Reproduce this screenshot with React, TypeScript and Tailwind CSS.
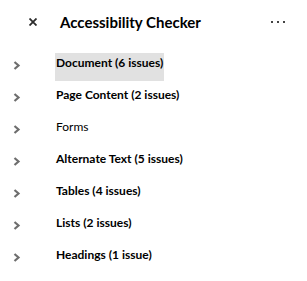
import React from "react";

const items = [
  { label: "Document (6 issues)", bold: true, active: true },
  { label: "Page Content (2 issues)", bold: true },
  { label: "Forms", bold: false },
  { label: "Alternate Text (5 issues)", bold: true },
  { label: "Tables (4 issues)", bold: true },
  { label: "Lists (2 issues)", bold: true },
  { label: "Headings (1 issue)", bold: true },
];

function Chevron() {
  return (
    <svg width="8" height="9" viewBox="0 0 8 9" className="block">
      <path d="M1.5 1 L5.5 4.5 L1.5 8" fill="none" stroke="#6e6e6e" strokeWidth="2.2" />
    </svg>
  );
}

export default function App() {
  return (
    <div
      className="h-[281px] w-[307px] bg-white text-[#1a1a1a]"
      style={{ fontFamily: 'Lato, "Open Sans", sans-serif' }}
    >
      <div className="flex h-[44px] items-center pl-[29px] pr-[22px]">
        <svg width="8" height="8" viewBox="0 0 8 8" className="block">
          <path d="M0.5 0.5 L7.5 7.5 M7.5 0.5 L0.5 7.5" stroke="#2c2c2c" strokeWidth="1.8" />
        </svg>
        <h1 className="ml-[23px] text-[15px] font-bold leading-none text-black">
          Accessibility Checker
        </h1>
        <div className="ml-auto flex gap-[4px]">
          <span className="h-[2px] w-[2px] bg-[#444]" />
          <span className="h-[2px] w-[2px] bg-[#444]" />
          <span className="h-[2px] w-[2px] bg-[#444]" />
        </div>
      </div>
      <ul className="mt-[9px]">
        {items.map((it) => (
          <li key={it.label} className="flex h-[32px] items-start">
            <div className="w-[55px] pl-[13px] pt-[8px]">
              <Chevron />
            </div>
            <span
              className={
                "px-[1px] pt-[2px] pb-[11px] text-[12px] leading-[15px] text-black " +
                (it.bold ? "font-bold " : "font-normal ") +
                (it.active ? "bg-[#e1e1e1]" : "")
              }
            >
              {it.label}
            </span>
          </li>
        ))}
      </ul>
    </div>
  );
}
